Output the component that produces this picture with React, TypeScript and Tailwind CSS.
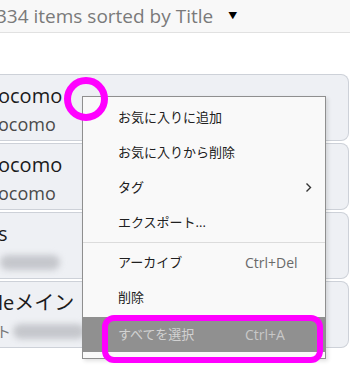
import React from 'react';

type Card = { title: string; sub?: string; blur?: boolean; lead?: string; tail?: string };

const CARDS: Card[] = [
  { title: 'ocomo', sub: 'ocomo' },
  { title: 'ocomo', sub: 'ocomo' },
  { title: 's', blur: true },
  { title: 'leメイン', blur: true, lead: 'ト', tail: '4' },
];

type Item = { label: string; shortcut?: string; sub?: boolean; sepAfter?: boolean; active?: boolean };

const ITEMS: Item[] = [
  { label: 'お気に入りに追加' },
  { label: 'お気に入りから削除' },
  { label: 'タグ', sub: true },
  { label: 'エクスポート...', sepAfter: true },
  { label: 'アーカイブ', shortcut: 'Ctrl+Del' },
  { label: '削除' },
  { label: 'すべてを選択', shortcut: 'Ctrl+A', active: true },
];

const font = { fontFamily: '"Open Sans", "Noto Sans CJK JP", sans-serif' };

function ListCard({ c }: { c: Card }) {
  return (
    <div className="h-[67px] rounded-r-[8px] border border-l-0 border-[#cdd1d8] bg-[#eef0f4] pt-[9px]">
      <div className="-ml-[2px] text-[20px] leading-[24px] text-[#1b1b1b]">{c.title}</div>
      {c.sub && <div className="-ml-[2px] mt-[5px] text-[18px] leading-[22px] text-[#4a4a4a]">{c.sub}</div>}
      {c.blur && (
        <div className="mt-[7px] flex h-[18px] items-center">
          {c.lead && <span className="-ml-[4px] text-[15px] text-[#777]">{c.lead}</span>}
          <div className={`h-[15px] rounded-full bg-[#c5c7cc] blur-[3px] ${c.lead ? 'ml-[2px] w-[72px]' : 'w-[60px]'}`} />
          {c.tail && <span className="ml-[2px] text-[15px] text-[#888]">{c.tail}</span>}
        </div>
      )}
    </div>
  );
}

export default function App() {
  return (
    <div className="relative h-[384px] w-[350px] overflow-hidden bg-white" style={font}>
      {/* header */}
      <div className="flex h-[33px] items-center border-b border-[#e1e1e1] bg-[#f8f8f8]">
        <span className="-ml-[4px] text-[19px] leading-none text-[#7a7a7a]">334 items sorted by Title</span>
        <span className="ml-[15px] text-[9px] text-black">▼</span>
      </div>

      {/* list */}
      <div className="mr-[1px] flex flex-col gap-[2px] pt-[41px]">
        {CARDS.map((c, i) => (
          <ListCard key={i} c={c} />
        ))}
      </div>

      {/* context menu */}
      <div className="absolute left-[82px] top-[96px] w-[244px] border border-[#8f8f8f] bg-[#f9f9f9] pt-[3px] pb-[6px] shadow-[2px_2px_4px_rgba(0,0,0,0.12)]">
        {ITEMS.map((it, i) => (
          <React.Fragment key={i}>
            {it.active && <div className="h-[2px]" />}
            <div
              className={`flex h-[35px] items-center pl-[35px] ${it.active ? 'bg-[#909090] text-[#d2d2d2]' : 'text-[#202020]'}`}
            >
              <span className="w-[127px] text-[13px]">{it.label}</span>
              {it.shortcut && (
                <span className={`text-[14px] ${it.active ? 'text-[#c8c8c8]' : 'text-[#6a6a6a]'}`}>{it.shortcut}</span>
              )}
              {it.sub && (
                <svg className="ml-[60px]" width="7" height="11" viewBox="0 0 7 11">
                  <path d="M1.5 1.5 L5.5 5.5 L1.5 9.5" fill="none" stroke="#333" strokeWidth="1.4" />
                </svg>
              )}
            </div>
            {it.sepAfter && (
              <div className="flex h-[5px] items-center">
                <div className="h-px w-full bg-[#dcdcdc]" />
              </div>
            )}
          </React.Fragment>
        ))}
      </div>

      {/* annotations */}
      <div className="absolute left-[64px] top-[77px] h-[44px] w-[44px] rounded-full border-[7px] border-[#ff00ff]" />
      <div className="absolute left-[102px] top-[315px] h-[48px] w-[221px] rounded-[12px] border-[6px] border-[#ff00ff]" />
    </div>
  );
}
